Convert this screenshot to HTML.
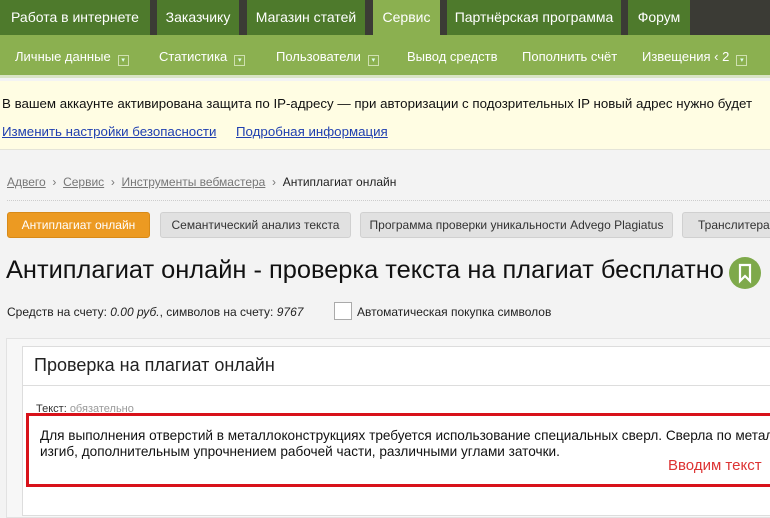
<!DOCTYPE html>
<html><head><meta charset="utf-8"><style>
*{margin:0;padding:0;box-sizing:border-box}
body{width:770px;height:512px;overflow:hidden;font-family:"Liberation Sans",sans-serif;background:#f3f3f3;position:relative;font-size:12px}
.a{position:absolute;white-space:nowrap}
#top{left:0;top:0;width:770px;height:35px;background:#3b3b35}
.t{position:absolute;top:0;height:35px;background:#4e7a2c;color:#fff;font-size:14px;line-height:35px;text-align:center}
#sub{left:0;top:35px;width:770px;height:43px;background:#8bb050;border-bottom:3px solid #d9e4c4}
.s{position:absolute;top:49px;color:#fff;font-size:13px}
.dd{display:inline-block;width:11px;height:11px;border:1px solid #cfe0b0;margin-left:7px;vertical-align:-1px;font-size:7px;line-height:9px;text-align:center;color:#dfe}
#note{left:0;top:81px;width:770px;height:69px;background:#fffde3;border-bottom:1px solid #e4e4d8}
.btn{position:absolute;top:212px;height:26px;border-radius:3px;background:#e1e1e1;border:1px solid #d0d0d0;color:#333;font-size:12px;line-height:24px;text-align:center;overflow:hidden;white-space:nowrap}
</style></head><body>
<div id="top" class="a"></div>
<div class="t" style="left:0;width:150px">Работа в интернете</div>
<div class="t" style="left:157px;width:82px">Заказчику</div>
<div class="t" style="left:247px;width:118px">Магазин статей</div>
<div class="t" style="left:373px;width:67px;background:#8bb050;height:36px">Сервис</div>
<div class="t" style="left:447px;width:174px">Партнёрская программа</div>
<div class="t" style="left:628px;width:62px">Форум</div>
<div id="sub" class="a"></div>
<div class="s" style="left:15px">Личные данные<span class="dd">▾</span></div>
<div class="s" style="left:159px">Статистика<span class="dd">▾</span></div>
<div class="s" style="left:276px">Пользователи<span class="dd">▾</span></div>
<div class="s" style="left:407px">Вывод средств</div>
<div class="s" style="left:522px">Пополнить счёт</div>
<div class="s" style="left:642px">Извещения ‹ 2<span class="dd">▾</span></div>
<div id="note" class="a"></div>
<div class="a" style="left:2px;top:96px;font-size:13.3px;color:#111">В вашем аккаунте активирована защита по IP-адресу — при авторизации с подозрительных IP новый адрес нужно будет</div>
<div class="a" style="left:2px;top:124px;font-size:13.3px;color:#1f3fb0;text-decoration:underline">Изменить настройки безопасности</div>
<div class="a" style="left:236px;top:124px;font-size:13.3px;color:#1f3fb0;text-decoration:underline">Подробная информация</div>
<div class="a" style="left:7px;top:175px;font-size:12px;color:#777"><u>Адвего</u> &nbsp;›&nbsp; <u>Сервис</u> &nbsp;›&nbsp; <u>Инструменты вебмастера</u> &nbsp;›&nbsp; <span style="color:#222">Антиплагиат онлайн</span></div>
<div class="a" style="left:7px;top:200px;width:763px;border-top:1px dotted #ccc"></div>
<div class="btn" style="left:7px;width:143px;background:#ec9a22;border-color:#d88a18;color:#fff">Антиплагиат онлайн</div>
<div class="btn" style="left:160px;width:191px">Семантический анализ текста</div>
<div class="btn" style="left:360px;width:313px">Программа проверки уникальности Advego Plagiatus</div>
<div class="btn" style="left:682px;width:100px;text-align:left;padding-left:15px">Транслитерация</div>
<div class="a" style="left:6px;top:256px;font-size:25.4px;color:#111">Антиплагиат онлайн - проверка текста на плагиат бесплатно</div>
<div class="a" style="left:729px;top:257px;width:32px;height:32px;border-radius:50%;background:#7ea94a"><svg width="32" height="32"><path d="M11 8h10v16l-5-5-5 5z" fill="none" stroke="#fff" stroke-width="2.2"/></svg></div>
<div class="a" style="left:7px;top:305px;font-size:12px;color:#222">Средств на счету: <i>0.00 руб.</i>, символов на счету: <i>9767</i></div>
<div class="a" style="left:334px;top:302px;width:18px;height:18px;background:#fff;border:1px solid #aaa"></div>
<div class="a" style="left:357px;top:305px;font-size:12px;color:#222">Автоматическая покупка символов</div>
<div class="a" style="left:6px;top:338px;width:770px;height:180px;background:#f7f7f7;border:1px solid #e2e2e2"></div>
<div class="a" style="left:22px;top:346px;width:760px;height:170px;background:#fff;border:1px solid #ddd"></div>
<div class="a" style="left:22px;top:385px;width:760px;border-top:1px solid #ddd"></div>
<div class="a" style="left:34px;top:355px;font-size:18px;color:#222">Проверка на плагиат онлайн</div>
<div class="a" style="left:36px;top:403px;font-size:11px;color:#333">Текст: <span style="color:#999">обязательно</span></div>
<div class="a" style="left:26px;top:413px;width:760px;height:74px;border:3px solid #d8121a;background:#fff"></div>
<div class="a" style="left:40px;top:428px;font-size:13.6px;color:#111;line-height:16px">Для выполнения отверстий в металлоконструкциях требуется использование специальных сверл. Сверла по металлу<br>изгиб, дополнительным упрочнением рабочей части, различными углами заточки.</div>
<div class="a" style="left:668px;top:457px;font-size:15px;color:#d33">Вводим текст</div>
</body></html>
